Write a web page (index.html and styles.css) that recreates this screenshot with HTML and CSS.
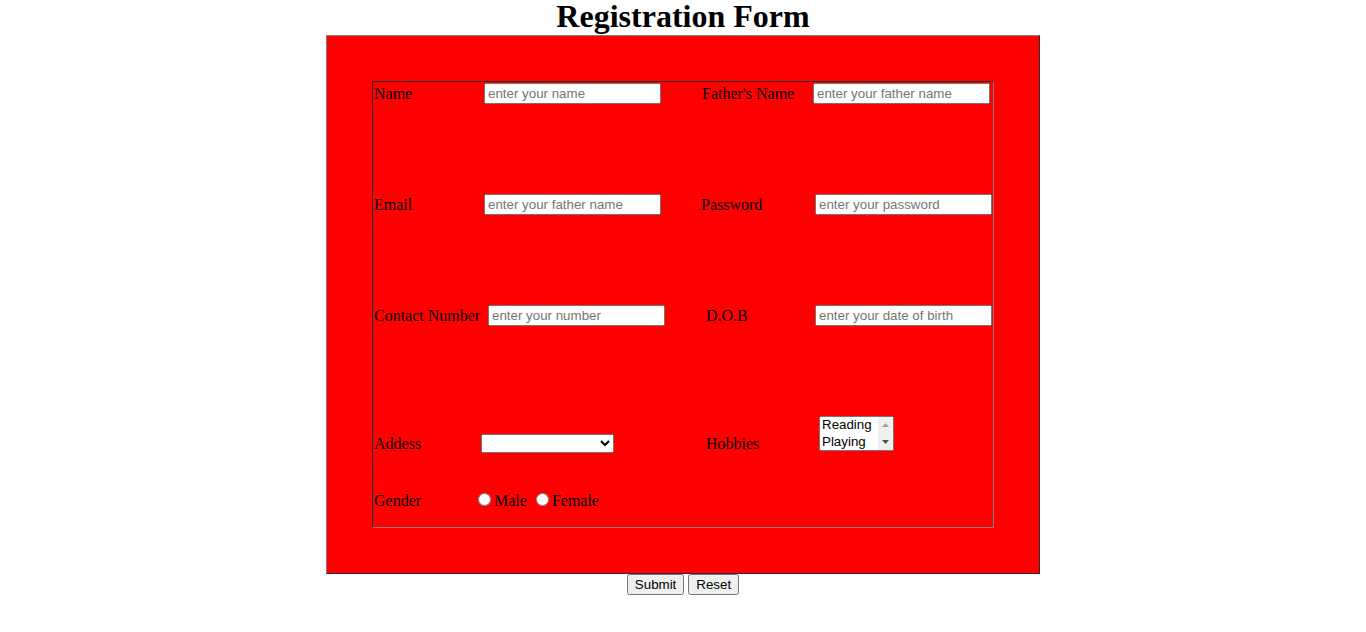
FILE: index.html
```html
<!DOCTYPE html>
<html>
<head>
<meta charset="utf-8">
<title>Registration Form</title>
<link rel="stylesheet" href="styles.css">
</head>
<body>
<h1 class="title">Registration Form</h1>
<form class="form">
  <div class="frame">
    <div class="panel">
      <div class="row">
        <label class="lbl w-name">Name</label><input class="field" type="text" placeholder="enter your name">
        <label class="lbl w-father">Father's Name</label><input class="field" type="text" placeholder="enter your father name">
      </div>
      <div class="row row-gap">
        <label class="lbl w-name">Email</label><input class="field" type="text" placeholder="enter your father name">
        <label class="lbl w-password">Password</label><input class="field" type="password" placeholder="enter your password">
      </div>
      <div class="row row-gap">
        <label class="lbl w-contact">Contact Number</label><input class="field" type="text" placeholder="enter your number">
        <label class="lbl w-dob">D.O.B</label><input class="field" type="text" placeholder="enter your date of birth">
      </div>
      <div class="row row-tall">
        <label class="lbl w-address">Addess</label><select class="dropdown"><option></option></select>
        <label class="lbl w-hobbies">Hobbies</label>
        <span class="listbox-wrap">
          <select class="listbox" multiple size="2"><option>Reading</option><option>Playing</option><option>Singing</option><option>Dancing</option></select>
          <span class="scroll" aria-hidden="true">
            <svg class="arrow" width="15" height="16" viewBox="0 0 15 16"><polygon points="4,10 11,10 7.5,6" fill="#a3a3a3"/></svg>
            <svg class="arrow" width="15" height="16" viewBox="0 0 15 16"><polygon points="4,6 11,6 7.5,10" fill="#505050"/></svg>
          </span>
        </span>
      </div>
      <div class="gender">
        <label class="lbl-inline w-gender">Gender</label><input class="radio" type="radio" name="g">Male <input class="radio" type="radio" name="g">Female
      </div>
    </div>
  </div>
  <div class="actions">
    <button type="submit" class="btn">Submit</button>
    <button type="reset" class="btn">Reset</button>
  </div>
</form>
</body>
</html>
```

FILE: styles.css
```css
html, body {
  margin: 0;
  padding: 0;
  background: #ffffff;
  font-family: "Liberation Serif", "Times New Roman", serif;
  font-size: 16px;
  color: #000;
}

.title {
  margin: 0 0 2px 0;
  font-size: 32px;
  font-weight: bold;
  line-height: 33px;
  text-align: center;
}

.form {
  margin: 0;
}

.frame {
  margin: 0 auto;
  padding: 45px;
  box-sizing: content-box;
  width: 622px;
  background: #ff0000;
  border: 1px outset gray;
}

.panel {
  height: 445px;
  border: 1px inset gray;
  padding-left: 1px;
}

.row {
  display: flex;
  align-items: center;
  height: 23px;
}

.row-gap {
  margin-top: 88px;
}

.row-tall {
  margin-top: 89px;
  height: 37px;
  align-items: flex-end;
}

.lbl {
  flex: none;
  display: block;
  line-height: normal;
  white-space: nowrap;
}

.w-name { width: 110px; }
.w-father { width: 111px; margin-left: 41px; }
.w-password { width: 114px; margin-left: 40px; }
.w-contact { width: 114px; }
.w-dob { width: 109px; margin-left: 41px; }
.w-address { width: 107px; }
.w-hobbies { width: 113px; margin-left: 92px; }

.field {
  flex: none;
  box-sizing: border-box;
  width: 177px;
  height: 21px;
  margin: 0;
  font-family: "Liberation Sans", Arial, sans-serif;
  font-size: 13.333px;
}

.dropdown {
  flex: none;
  box-sizing: border-box;
  width: 133px;
  height: 19px;
  margin: 0;
  font-family: "Liberation Sans", Arial, sans-serif;
  font-size: 13.333px;
}

.listbox-wrap {
  flex: none;
  position: relative;
  display: block;
  width: 75px;
  height: 35px;
  margin-bottom: 2px;
}

.listbox {
  display: block;
  box-sizing: border-box;
  width: 75px;
  height: 35px;
  margin: 0;
  overflow: hidden;
  font-family: "Liberation Sans", Arial, sans-serif;
  font-size: 13.333px;
}

.scroll {
  position: absolute;
  top: 1px;
  right: 1px;
  width: 15px;
  height: 33px;
  background: #f0f0f0;
  display: flex;
  flex-direction: column;
  justify-content: space-between;
}

.arrow {
  display: block;
}

.gender {
  margin-top: 37px;
  white-space: nowrap;
}

.lbl-inline {
  display: inline-block;
}

.w-gender { width: 99px; }

.radio {
  margin: 3px 3px 0 5px;
  vertical-align: baseline;
}

.actions {
  display: flex;
  justify-content: center;
  gap: 4px;
}

.btn {
  margin: 0;
  font-family: "Liberation Sans", Arial, sans-serif;
  font-size: 13.333px;
}
```
